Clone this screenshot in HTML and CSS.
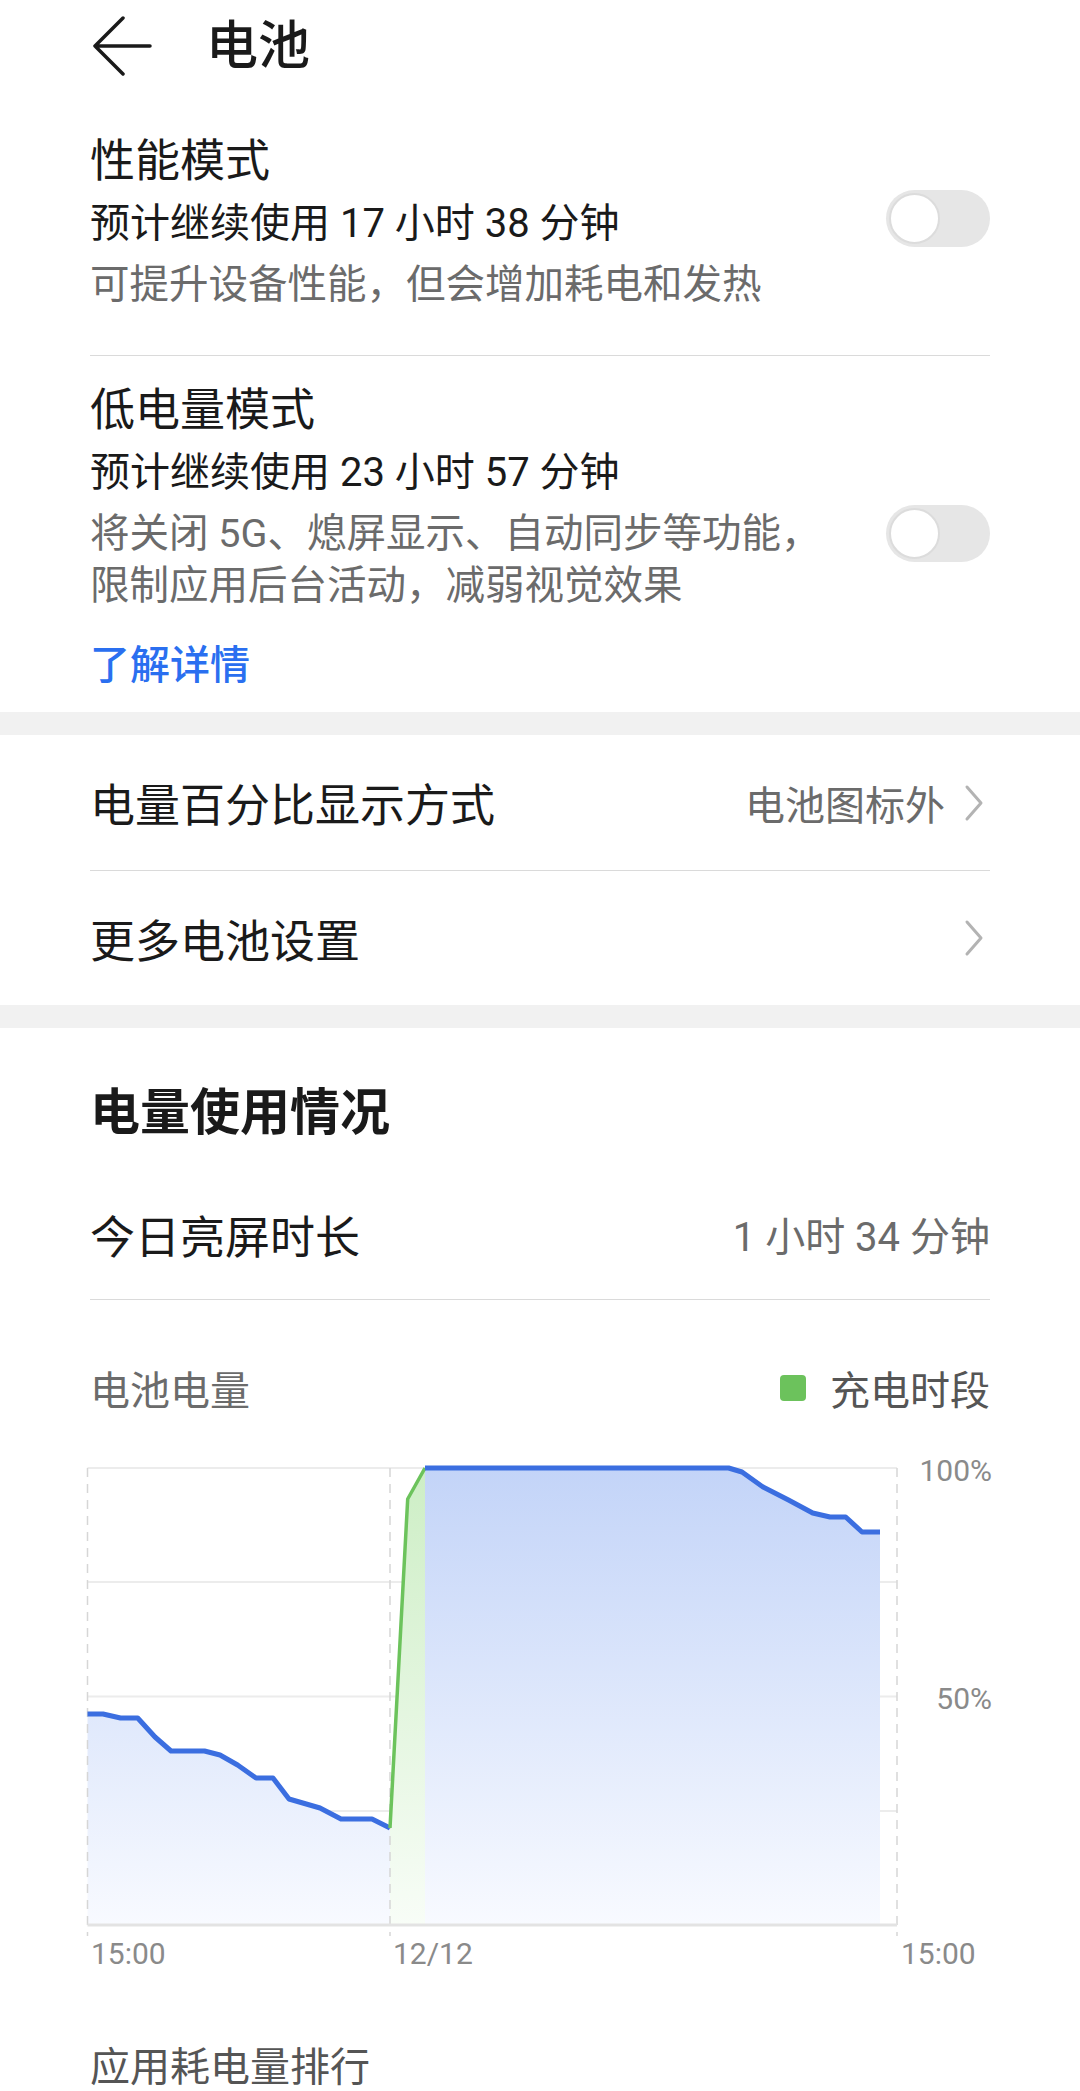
FILE: index.html
```html
<!DOCTYPE html>
<html lang="zh-CN">
<head>
    <meta charset="UTF-8">
    <meta name="viewport" content="width=device-width, initial-scale=1.0">
    <title>电池</title>
    <link rel="stylesheet" href="styles.css">
</head>
<body>

    <header class="topbar">
        <svg class="back" width="60" height="60" viewBox="0 0 60 60">
            <path d="M3 30 L31 2 M3 30 L31 58 M3 30 H58" />
        </svg>
        <h1>电池</h1>
    </header>

    <section class="card">
        <div class="mode-item">
            <div class="mode-text">
                <div class="mode-title">性能模式</div>
                <div class="mode-sub">预计继续使用 17 小时 38 分钟</div>
                <div class="mode-desc">可提升设备性能，但会增加耗电和发热</div>
            </div>
            <span class="switch"></span>
        </div>

        <div class="divider"></div>

        <div class="mode-item low">
            <div class="mode-text">
                <div class="mode-title">低电量模式</div>
                <div class="mode-sub">预计继续使用 23 小时 57 分钟</div>
                <div class="mode-desc">将关闭 5G、熄屏显示、自动同步等功能，<br>限制应用后台活动，减弱视觉效果</div>
            </div>
            <span class="switch"></span>
        </div>

        <a class="more-link" href="#">了解详情</a>
    </section>

    <div class="gap"></div>

    <section class="card">
        <div class="row">
            <span class="row-title">电量百分比显示方式</span>
            <span class="row-value">电池图标外
                <svg class="chevron" width="20" height="38" viewBox="0 0 20 38"><path d="M3 3 L17 19 L3 35" /></svg>
            </span>
        </div>
        <div class="divider"></div>
        <div class="row">
            <span class="row-title">更多电池设置</span>
            <span class="row-value">
                <svg class="chevron" width="20" height="38" viewBox="0 0 20 38"><path d="M3 3 L17 19 L3 35" /></svg>
            </span>
        </div>
    </section>

    <div class="gap"></div>

    <section class="card usage">
        <h2>电量使用情况</h2>

        <div class="row screen-time">
            <span class="row-title">今日亮屏时长</span>
            <span class="row-value">1 小时 34 分钟</span>
        </div>

        <div class="divider"></div>

        <div class="legend-row">
            <span class="legend-label">电池电量</span>
            <span class="legend"><i class="legend-dot"></i>充电时段</span>
        </div>

        <div class="chart">
            <svg width="1080" height="540" viewBox="0 0 1080 540">
                <defs>
                    <linearGradient id="blueFill" gradientUnits="userSpaceOnUse" x1="0" y1="28" x2="0" y2="485">
                        <stop offset="0" stop-color="#c3d4f8" />
                        <stop offset="1" stop-color="#f8faff" />
                    </linearGradient>
                    <linearGradient id="greenFill" gradientUnits="userSpaceOnUse" x1="0" y1="28" x2="0" y2="485">
                        <stop offset="0" stop-color="#cdeec5" />
                        <stop offset="1" stop-color="#f8fdf7" />
                    </linearGradient>
                </defs>

                <!-- grid -->
                <g class="grid">
                    <line x1="87.5" y1="28" x2="897" y2="28" />
                    <line x1="87.5" y1="142" x2="897" y2="142" />
                    <line x1="87.5" y1="256.5" x2="897" y2="256.5" />
                    <line x1="87.5" y1="371" x2="897" y2="371" />
                </g>

                <!-- areas -->
                <polygon fill="url(#blueFill)" points="87.5,274 103,274 120.5,278 137.7,278 155,297 171,311 204.5,311 220,315 237.6,325 256,338 273,338 289,359 320,368 341,379 372,379 390,388 390,485 87.5,485" />
                <polygon fill="url(#greenFill)" points="390,388 407.7,59 425,28 425,485 390,485" />
                <polygon fill="url(#blueFill)" points="425,28 728.6,28 742,32 763,47 788.5,60 812.7,73 830,77 845.7,77 862,92 880,92 880,485 425,485" />

                <g class="vgrid">
                    <line x1="87.5" y1="28" x2="87.5" y2="496" />
                    <line x1="390" y1="28" x2="390" y2="496" />
                    <line x1="897" y1="28" x2="897" y2="496" />
                </g>
                <line class="axis" x1="87.5" y1="485" x2="897" y2="485" />

                <!-- lines -->
                <polyline class="line-blue" points="87.5,274 103,274 120.5,278 137.7,278 155,297 171,311 204.5,311 220,315 237.6,325 256,338 273,338 289,359 320,368 341,379 372,379 390,388" />
                <polyline class="line-green" points="390,388 407.7,59 425,28" />
                <polyline class="line-blue" points="425,28 728.6,28 742,32 763,47 788.5,60 812.7,73 830,77 845.7,77 862,92 880,92" />

                <!-- labels -->
                <text class="tick" x="992" y="41" text-anchor="end">100%</text>
                <text class="tick" x="992" y="269" text-anchor="end">50%</text>
                <text class="tick" x="91" y="524">15:00</text>
                <text class="tick" x="393" y="524">12/12</text>
                <text class="tick" x="901" y="524">15:00</text>
            </svg>
        </div>

        <h3 class="rank-title">应用耗电量排行</h3>
    </section>

</body>
</html>
```

FILE: styles.css
```css
body {
    margin: 0;
    background-color: #fff;
    color: #1a1a1a;
    font-family: Roboto, "Noto Sans CJK SC", sans-serif;
    height: 2091px;
    overflow: hidden;
}

.topbar {
    display: flex;
    align-items: center;
    height: 94px;
    padding-left: 92px;
}

.back {
    margin-top: -2px;
}

.back path {
    fill: none;
    stroke: #1a1a1a;
    stroke-width: 3.5;
    stroke-linecap: round;
    stroke-linejoin: round;
}

.topbar h1 {
    margin: 0 0 0 54px;
    font-size: 52px;
    font-weight: 500;
    line-height: 60px;
}

.card {
    padding: 0 90px;
}

.gap {
    height: 23px;
    background-color: #f1f1f1;
}

.divider {
    height: 1px;
    background-color: #dadada;
}

/* mode toggles */
.mode-item {
    display: flex;
    justify-content: space-between;
    align-items: flex-start;
    padding: 37px 0 44px;
}

.mode-item.low {
    padding: 24px 0 0;
}

.mode-title {
    font-size: 45px;
    line-height: 62px;
}

.mode-sub {
    font-size: 40px;
    line-height: 62px;
}

.mode-desc {
    margin-top: 4px;
    font-size: 39.5px;
    line-height: 52px;
    color: #6b6b6b;
}

.switch {
    position: relative;
    flex-shrink: 0;
    width: 104px;
    height: 57px;
    margin-top: 59px;
    border-radius: 29px;
    background-color: #e6e6e6;
}

.low .switch {
    margin-top: 125px;
}

.switch::after {
    content: "";
    position: absolute;
    left: 3px;
    top: 3px;
    width: 47px;
    height: 47px;
    border-radius: 50%;
    background-color: #fff;
    border: 2px solid #dcdcdc;
}

.more-link {
    display: block;
    margin-top: 23px;
    padding-bottom: 15px;
    font-size: 40px;
    font-weight: 500;
    line-height: 62px;
    color: #2a6ff0;
    text-decoration: none;
}

/* list rows */
.row {
    display: flex;
    justify-content: space-between;
    align-items: center;
    height: 135px;
}

.row + .divider + .row {
    height: 134px;
}

.row-title {
    font-size: 45px;
}

.row-value {
    display: flex;
    align-items: center;
    font-size: 40px;
    color: #6b6b6b;
}

.chevron {
    margin: 0 6px 0 19px;
}

.chevron path {
    fill: none;
    stroke: #b3b3b3;
    stroke-width: 3;
    stroke-linecap: round;
    stroke-linejoin: round;
}

/* usage */
.usage {
    padding-top: 52px;
}

.usage h2 {
    margin: 0 0 23px;
    font-size: 50px;
    font-weight: 700;
    line-height: 66px;
}

.row.screen-time {
    height: 130px;
}

.legend-row {
    display: flex;
    justify-content: space-between;
    align-items: center;
    margin-top: 60px;
    height: 56px;
    font-size: 40px;
}

.legend-label {
    color: #6b6b6b;
}

.legend {
    display: flex;
    align-items: center;
    color: #555;
}

.legend-dot {
    width: 26px;
    height: 26px;
    margin-right: 24px;
    border-radius: 4px;
    background-color: #6cc25c;
}

.chart {
    margin: 24px -90px 0;
    height: 540px;
}

.chart svg {
    display: block;
}

.grid line {
    stroke: #ececec;
    stroke-width: 2;
}

.vgrid line {
    stroke: #d6d6d6;
    stroke-width: 1.5;
    stroke-dasharray: 9 7;
}

.axis {
    stroke: #e3e3e3;
    stroke-width: 3;
}

.line-blue {
    fill: none;
    stroke: #3b6ee0;
    stroke-width: 5;
    stroke-linejoin: round;
}

.line-green {
    fill: none;
    stroke: #6cc35c;
    stroke-width: 3.5;
    stroke-linejoin: round;
}

.tick {
    font-family: Roboto, "Noto Sans CJK SC", sans-serif;
    font-size: 30px;
    fill: #8a8a8a;
}

.rank-title {
    margin: 58px 0 0;
    font-size: 40px;
    font-weight: 400;
    line-height: 60px;
    color: #555;
}
```
